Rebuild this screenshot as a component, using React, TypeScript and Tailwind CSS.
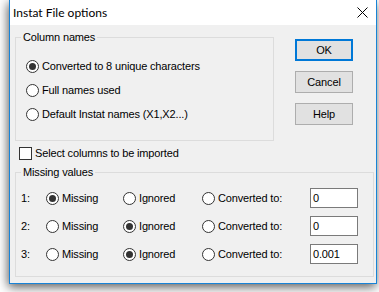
import React from 'react';

const Radio: React.FC<{ checked?: boolean; label: string }> = ({ checked, label }) => (
    <div className="flex items-center">
        <span className="w-[13px] h-[13px] shrink-0 rounded-full border border-[#333333] bg-white flex items-center justify-center">
            {checked && <span className="w-[7px] h-[7px] rounded-full bg-[#333333]" />}
        </span>
        <span className="ml-[3px]">{label}</span>
    </div>
);

const Button: React.FC<{ label: string; primary?: boolean }> = ({ label, primary }) => (
    <button
        className={
            primary
                ? 'w-[58px] h-[22px] bg-[#e1e1e1] border-2 border-[#0078d7] flex items-center justify-center'
                : 'w-[58px] h-[22px] bg-[#e1e1e1] border border-[#adadad] flex items-center justify-center'
        }
    >
        {label}
    </button>
);

const missingRows = [
    { n: '1:', sel: 0, value: '0' },
    { n: '2:', sel: 1, value: '0' },
    { n: '3:', sel: 1, value: '0.001' },
];

export default function App() {
    return (
        <div className="w-[379px] h-[292px] bg-white overflow-hidden">
            <div className="ml-[9px] w-[368px] h-[284px] border-x border-b border-[#1883d7] bg-[#f0f0f0] flex flex-col shadow-[-1px_3px_10px_rgba(0,0,0,0.65)] text-[11px] leading-[13px] tracking-[-0.15px] text-black font-['Liberation_Sans',Arial,sans-serif]">
                {/* title bar */}
                <div className="h-[25px] bg-white flex items-center justify-between pl-[3px] pr-[8px]">
                    <span className="text-[12px] tracking-normal font-['Lato',sans-serif]">Instat File options</span>
                    <svg width="11" height="11" viewBox="0 0 11 11">
                        <path d="M0.5 0.5 L10.5 10.5 M10.5 0.5 L0.5 10.5" stroke="#000" strokeWidth="1" />
                    </svg>
                </div>

                <div className="flex flex-col pl-[5px]">
                    <div className="flex pt-[6px]">
                        <fieldset className="w-[259px] h-[110px] border border-[#dcdcdc] flex flex-col">
                            <legend className="ml-[5px] px-[2px]">Column names</legend>
                            <div className="flex flex-col pl-[10px] pt-[10px]">
                                <div className="h-[24px] flex items-center">
                                    <Radio checked label="Converted to 8 unique characters" />
                                </div>
                                <div className="h-[24px] flex items-center">
                                    <Radio label="Full names used" />
                                </div>
                                <div className="h-[24px] flex items-center">
                                    <Radio label="Default Instat names (X1,X2...)" />
                                </div>
                            </div>
                        </fieldset>
                        <div className="ml-[21px] mt-[8px] flex flex-col gap-[10px]">
                            <Button label="OK" primary />
                            <Button label="Cancel" />
                            <Button label="Help" />
                        </div>
                    </div>

                    <div className="mt-[5px] h-[14px] pl-[4px] flex items-center">
                        <span className="w-[13px] h-[13px] border border-[#333333] bg-white" />
                        <span className="ml-[3px]">Select columns to be imported</span>
                    </div>

                    <fieldset className="mt-[6px] w-[359px] h-[111px] border border-[#dcdcdc] flex flex-col">
                        <legend className="ml-[5px] px-[2px]">Missing values</legend>
                        <div className="flex flex-col pl-[5px] pt-[5px]">
                            {missingRows.map((r) => (
                                <div key={r.n} className="h-[28px] flex items-center">
                                    <span className="w-[25px]">{r.n}</span>
                                    <div className="w-[77px]">
                                        <Radio checked={r.sel === 0} label="Missing" />
                                    </div>
                                    <div className="w-[79px]">
                                        <Radio checked={r.sel === 1} label="Ignored" />
                                    </div>
                                    <div className="w-[108px]">
                                        <Radio checked={r.sel === 2} label="Converted to:" />
                                    </div>
                                    <div className="w-[48px] h-[20px] border border-[#7a7a7a] bg-white px-[2px] flex items-center">
                                        {r.value}
                                    </div>
                                </div>
                            ))}
                        </div>
                    </fieldset>
                </div>
            </div>
        </div>
    );
}
